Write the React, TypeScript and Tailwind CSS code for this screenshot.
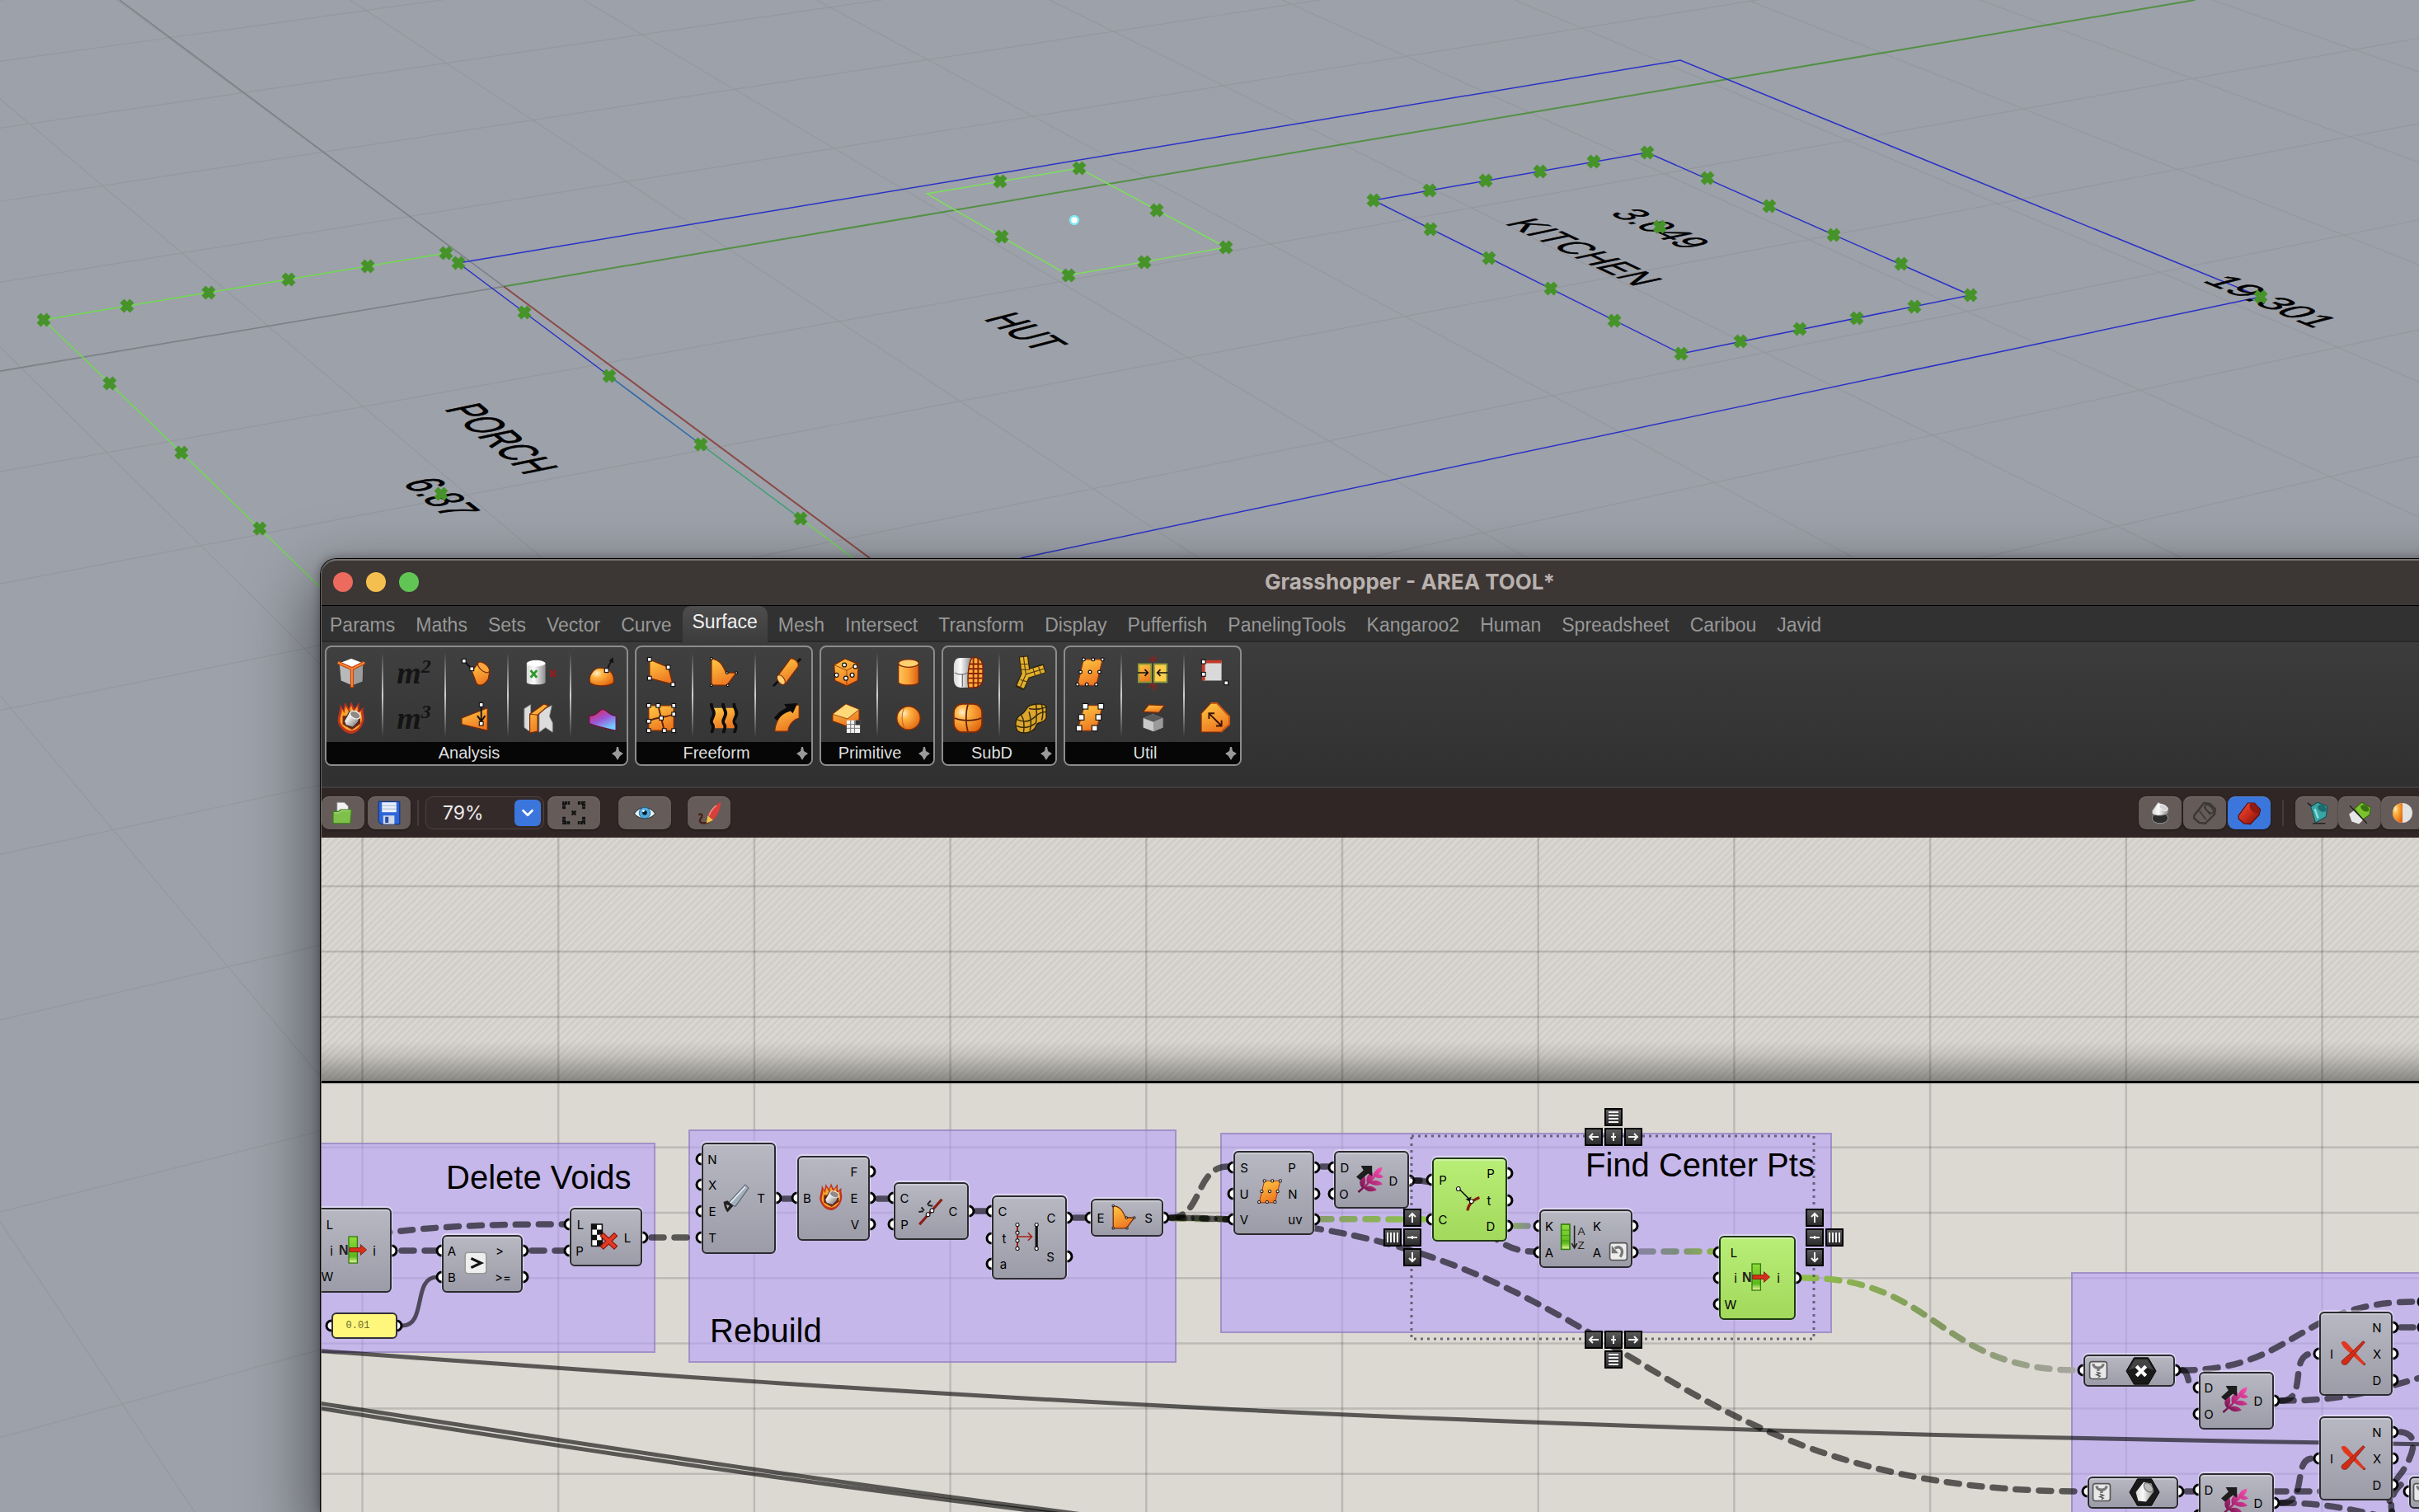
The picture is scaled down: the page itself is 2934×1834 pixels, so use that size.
import React from "react";
import { ChevronDown } from "lucide-react";

type Pt = [number, number];

/* ---------- 3D viewport ---------- */

const project = (u: number, v: number): Pt => {
  const d = 1 + 0.02375 * u - 0.044 * v;
  return [(611 + 293 * u + 92.8 * v) / d, (347.5 - 38.94 * u + 73.35 * v) / d];
};

const range = (a: number, b: number) => Array.from({ length: b - a + 1 }, (_, i) => a + i);

const gridLines: [Pt, Pt][] = [
  ...range(-15, 14).map((u) => [project(u, -20), project(u, 12)] as [Pt, Pt]),
  ...range(-20, 12).map((v) => [project(-15, v), project(14, v)] as [Pt, Pt]),
];

const crosses: Pt[] = [
  [53, 388], [154, 371], [253, 355], [350, 339], [446, 323], [541, 307], [556, 319], [636, 379], [739, 456],
  [850, 539], [971, 629], [133, 465], [220, 549], [315, 641], [535, 599],
  [1213, 220], [1309, 204], [1403, 255], [1487, 300], [1388, 318], [1296, 334], [1215, 287],
  [1666, 243], [1734, 231], [1802, 219], [1868, 208], [1933, 196], [1998, 185], [2071, 216], [2146, 250],
  [2224, 285], [2306, 320], [2390, 358], [2322, 372], [2252, 386], [2183, 399], [2111, 414], [2039, 429],
  [1958, 389], [1881, 350], [1806, 313], [1735, 278], [2013, 275], [2742, 360],
];

const floorLabels: [string, string][] = [
  ["PORCH", "matrix(0.69 0.56 -1.5 0.31 538 496)"],
  ["6.87", "matrix(0.71 0.55 -1.5 0.31 487 586)"],
  ["HUT", "matrix(0.82 0.49 -1.35 0.35 1192 387)"],
  ["KITCHEN", "matrix(0.91 0.436 -1.28 0.27 1824 271)"],
  ["3.049", "matrix(0.92 0.436 -1.26 0.26 1951 259)"],
  ["19.301", "matrix(1.12 0.47 -1.2 0.31 2670 341)"],
];

function Scene() {
  return (
    <svg className="absolute inset-0 h-full w-full" aria-hidden="true">
      {gridLines.map(([a, b], i) => (
        <line key={i} x1={a[0]} y1={a[1]} x2={b[0]} y2={b[1]} stroke="#94989f" strokeWidth="1.2" />
      ))}
      <path d="M145 0L611 347.5L0 450" fill="none" stroke="#7b7f86" strokeWidth="1.5" />
      <path d="M611 347.5L2662 0" stroke="#539145" strokeWidth="2" />
      <path d="M611 347.5L1055 677" stroke="#8c4a48" strokeWidth="2" />
      <g fill="none" strokeWidth="1.5">
        <path d="M739 456L556 319L2038 73L2742 360L1238 677" stroke="#2a31c8" />
        <path d="M739 456L850 539" stroke="#2a68a8" />
        <path d="M850 539L971 629" stroke="#35a070" />
        <path d="M971 629L1036 678M541 307L53 388L133 465L220 549L315 641L388 712" stroke="#6fdc4e" />
        <path d="M1124 235L1309 204L1487 300L1296 334Z" stroke="#7de05a" />
        <path d="M1666 243L1998 185L2390 358L2039 429Z" stroke="#2a31c8" />
      </g>
      <g fontFamily="Liberation Sans, Arial, sans-serif" fontSize="40" fill="#000" stroke="#000" strokeWidth="0.6">
        {floorLabels.map(([t, m]) => (
          <text key={t} transform={m}>{t}</text>
        ))}
      </g>
      {crosses.map(([x, y], i) => (
        <path key={i} d={`M${x - 6} ${y - 6}l12 12m0 -12l-12 12`} stroke="#459329" strokeWidth="7" />
      ))}
      <circle cx="1303" cy="267" r="5" fill="#fff" stroke="#7fe9ee" strokeWidth="2.5" />
    </svg>
  );
}

/* ---------- icons ---------- */

function Defs() {
  return (
    <svg className="absolute h-0 w-0" aria-hidden="true">
      <defs>
        <linearGradient id="or" x1="0" y1="0" x2="0.4" y2="1">
          <stop offset="0" stopColor="#ffcb45" /><stop offset="1" stopColor="#ee7a22" />
        </linearGradient>
        <linearGradient id="orH"><stop offset="0" stopColor="#ffc65a" /><stop offset="0.5" stopColor="#f9a035" /><stop offset="1" stopColor="#d95f12" /></linearGradient>
        <radialGradient id="orR" cx="0.3" cy="0.3" r="0.8"><stop offset="0" stopColor="#fff0c8" /><stop offset="0.3" stopColor="#ffb545" /><stop offset="1" stopColor="#e2660f" /></radialGradient>
        <linearGradient id="gy"><stop offset="0" stopColor="#d8d8d8" /><stop offset="0.4" stopColor="#fafafa" /><stop offset="1" stopColor="#8d8d8d" /></linearGradient>
        <linearGradient id="gd" x1="0" y1="0" x2="1" y2="1"><stop offset="0" stopColor="#8f8a86" /><stop offset="0.35" stopColor="#f2f0ee" /><stop offset="1" stopColor="#5d5855" /></linearGradient>
        <linearGradient id="bp" x1="0" y1="0" x2="0.6" y2="1"><stop offset="0.1" stopColor="#e02560" /><stop offset="0.55" stopColor="#9a58d8" /><stop offset="1" stopColor="#6fd0ff" /></linearGradient>
        <linearGradient id="rd" x1="0" y1="0" x2="1" y2="1"><stop offset="0" stopColor="#f0573c" /><stop offset="0.5" stopColor="#c62a1a" /><stop offset="1" stopColor="#6e120c" /></linearGradient>
        <linearGradient id="gn" x1="0" y1="0" x2="0" y2="1"><stop offset="0" stopColor="#8fdc3c" /><stop offset="0.75" stopColor="#5cb81c" /><stop offset="1" stopColor="#f0f7a0" /></linearGradient>
        <linearGradient id="pk" x1="1" y1="0" x2="0" y2="1"><stop offset="0" stopColor="#ff4fb4" /><stop offset="0.6" stopColor="#b02878" /><stop offset="1" stopColor="#5e1040" /></linearGradient>
        <linearGradient id="w1" gradientUnits="userSpaceOnUse" x1="1600" y1="0" x2="1730" y2="0"><stop offset="0" stopColor="#869c69" /><stop offset="1" stopColor="#90c548" /></linearGradient>
        <linearGradient id="w2" gradientUnits="userSpaceOnUse" x1="1835" y1="0" x2="1860" y2="0"><stop offset="0" stopColor="#88a866" /><stop offset="1" stopColor="#84849a" /></linearGradient>
        <linearGradient id="w3" gradientUnits="userSpaceOnUse" x1="1987" y1="0" x2="2078" y2="0"><stop offset="0" stopColor="#8884a6" /><stop offset="0.5" stopColor="#7d8c7c" /><stop offset="1" stopColor="#8cb648" /></linearGradient>
        <linearGradient id="w4" gradientUnits="userSpaceOnUse" x1="2185" y1="0" x2="2520" y2="0"><stop offset="0" stopColor="#8ebe48" /><stop offset="0.5" stopColor="#829860" /><stop offset="1" stopColor="#a8a6a2" /></linearGradient>
      </defs>
    </svg>
  );
}

const O = "#7a2a08";

const sq = (pts: Pt[], s = 5) =>
  pts.map(([x, y], i) => <rect key={i} x={x - s / 2} y={y - s / 2} width={s} height={s} fill="#fff" stroke="#111" strokeWidth="1.2" />);
const dots = (pts: Pt[], r = 2) =>
  pts.map(([x, y], i) => <circle key={i} cx={x} cy={y} r={r} fill="#fff" stroke="#111" strokeWidth="1.3" />);

const icons: Record<string, React.ReactNode> = {
  box: (<>
    <path d="M20 2L35 8L34 31L21 36L7 30L5 8Z" fill="#b9b9b9" /><path d="M20 2L35 8L21 15L5 8Z" fill="#fff" /><path d="M21 15L35 8L34 31L21 36Z" fill="#9c9c9c" />
    <path d="M3 7L21 15L37 7M21 15V39" fill="none" stroke="#c8440f" strokeWidth="4.5" /><path d="M3 7L21 15L37 7M21 15V38" fill="none" stroke="#f78b35" strokeWidth="2" />
  </>),
  flame: (<>
    <path d="M6 2L10 10L12 0L17 8L20 -1L24 8L30 0L30 11L36 6C34 13 38 16 36 24C34 33 26 40 20 40C13 40 5 33 3 25C2 17 6 12 6 2Z" fill="#c2321c" />
    <path d="M8 8L11 14L13 5L17 12L20 4L23 12L28 5L28 14L33 11C32 17 35 19 33 25C31 32 25 36 20 36C14 36 8 31 6 25C5 18 9 14 8 8Z" fill="#f7a52a" />
    <path d="M9 17L31 17L32 27L21 35L9 28Z" fill="#7d2412" />
    <path d="M11 24L18 11L31 16L29 25L22 32L13 29Z" fill="url(#gd)" stroke="#3b2c26" strokeWidth="1.2" strokeLinejoin="round" /><ellipse cx="25" cy="16" rx="7" ry="4.5" transform="rotate(25 25 16)" fill="#8f8a86" stroke="#f4f4f4" strokeWidth="1.3" />
  </>),
  pointIn: (<>
    <path d="M14 18L22 8L37 17L35 28C30 36 24 38 20 34Z" fill="url(#or)" stroke={O} strokeWidth="1.4" /><ellipse cx="29" cy="13" rx="9" ry="4.5" transform="rotate(40 29 13)" fill="#f9a640" stroke={O} strokeWidth="1.3" />
    <path d="M4 5L14 15" stroke="#111" strokeWidth="2" />{sq([[4, 5], [14, 15]])}
  </>),
  cone: (<>
    <path d="M1 20L34 7V36L1 28Z" fill="url(#or)" stroke={O} strokeWidth="1.4" /><path d="M26 3V26M21 17L26 24L31 17" fill="none" stroke="#111" strokeWidth="2" />{sq([[26, 3], [26, 27]])}
  </>),
  inside: (<>
    <path d="M4 8V32C4 36 28 36 28 32V8Z" fill="url(#gy)" /><ellipse cx="16" cy="8" rx="12" ry="4" fill="#fff" />
    <path d="M9 17l8 9m0-9l-8 9" stroke="#2f9a2a" strokeWidth="3" /><path d="M34 17l7 8m0-8l-7 8" stroke="#8e1f1f" strokeWidth="3" />
  </>),
  planks: (<>
    <path d="M1 8L9 3V38L1 32ZM20 12L36 4L33 18L37 26V38L28 32L20 38Z" fill="#dcdcdc" stroke="#999" strokeWidth="1" />
    <path d="M8 15L26 2L32 4L18 16V37L8 39Z" fill="url(#or)" stroke={O} strokeWidth="1.3" /><path d="M8 15L18 16" stroke={O} />
  </>),
  bump: (<>
    <path d="M5 33C2 24 10 12 20 14C31 14 37 24 35 33C28 38 11 38 5 33Z" fill="url(#orR)" stroke={O} strokeWidth="1.4" />
    <path d="M26 17L33 3" stroke="#111" strokeWidth="2" /><path d="M29 5L34 0L35 8Z" fill="#111" />{sq([[26, 17]])}
  </>),
  curvature: <path d="M4 17C14 18 16 9 21 9C27 9 28 17 38 17V36C28 34 14 31 4 27Z" fill="url(#bp)" stroke="#6a1038" strokeWidth="1.2" />,
  patch4: (<><path d="M5 3L29 13L35 35L5 27Z" fill="url(#or)" stroke={O} strokeWidth="1.5" />{sq([[5, 3], [29, 13], [35, 35], [5, 27]])}</>),
  net: (<>
    <path d="M4 4H36V36H4Z" fill="url(#or)" stroke={O} strokeWidth="1.3" /><path d="M16 4L24 36M4 24C14 18 26 20 36 15" stroke="#5b2008" strokeWidth="2" fill="none" />{sq([[4, 4], [16, 4], [36, 4], [4, 24], [20, 20], [36, 15], [4, 36], [24, 36], [36, 36]])}
  </>),
  edgeSrf: (<><path d="M4 2C16 3 19 12 23 20L36 20L24 36H4Z" fill="url(#or)" stroke={O} strokeWidth="1.6" />{dots([[4, 2], [24, 20], [36, 20], [25, 36], [4, 36]], 1.5)}</>),
  waves: (<>
    <path d="M6 7H34C32 15 38 18 35 24L36 33H8L5 24C9 18 4 14 6 7Z" fill="url(#or)" />
    <path d="M4 1C3 8 9 10 7 16C5 22 2 24 6 29C8 33 4 35 5 39M19 1C18 8 24 10 22 16C20 22 17 24 21 29C23 33 19 35 20 39M33 1C32 8 38 10 36 16C34 22 31 24 35 29C37 33 33 35 34 39" fill="none" stroke="#0d0d0d" strokeWidth="4" />
  </>),
  roll: (<><path d="M3 37L38 2" stroke="#111" strokeWidth="3" /><path d="M8 25L25 2C31 1 36 7 35 12L18 35C12 36 8 31 8 25Z" fill="url(#or)" stroke={O} strokeWidth="1.4" /><ellipse cx="13" cy="29" rx="4" ry="7" transform="rotate(-35 13 29)" fill="#ffce70" stroke={O} /></>),
  sweep: (<><path d="M5 37C6 20 18 8 33 3L36 4V20C28 22 22 30 22 37Z" fill="url(#or)" stroke={O} strokeWidth="1.2" /><path d="M4 20C10 12 15 9 20 7L17 2L34 1L28 14L25 11C18 13 12 17 8 23Z" fill="#0b0b0b" /></>),
  dice: (<><path d="M19 2L36 9L35 30L21 37L6 30L5 10Z" fill="url(#or)" stroke={O} strokeWidth="1.4" /><path d="M5 10L21 17L36 9M21 17V37" stroke={O} fill="none" strokeWidth="0.8" />{dots([[18, 10], [32, 12], [8, 23], [20, 27], [28, 23]], 2.6)}</>),
  plate: (<><path d="M3 15L20 2L37 9V22L20 30L3 24Z" fill="url(#or)" stroke={O} strokeWidth="1.3" /><path d="M3 15L20 2L37 9L22 21Z" fill="#ffd877" stroke={O} strokeWidth="0.8" /><path d="M21 23H38V39H21Z" fill="#f2f2f2" /><path d="M26 23V39M31 23V39M21 28H38M21 33H38" stroke="#777" /><path d="M32 23h6v6h-6z" fill="#333" /></>),
  cyl: (<><path d="M7 8V32C7 37 33 37 33 32V8Z" fill="url(#orH)" stroke={O} strokeWidth="1.4" /><ellipse cx="20" cy="8" rx="13" ry="5" fill="#ffd070" stroke={O} strokeWidth="1.4" /></>),
  ball: (<><circle cx="20" cy="20" r="15" fill="url(#orR)" stroke={O} strokeWidth="1.4" /><path d="M15 6C10 15 11 27 16 35" stroke="#c05a10" fill="none" /></>),
  capsule: (<>
    <path d="M24 1H10C4 1 2 6 2 12V28C2 35 5 39 11 39H22Z" fill="url(#gy)" /><path d="M3 20C8 23 14 23 20 20M13 22V38" stroke="#777" fill="none" strokeWidth="1.4" />
    <path d="M25 1C34 -1 39 5 39 12V28C39 36 33 40 21 39C19 30 20 10 25 1Z" fill="#ffb13c" stroke="#7a2008" strokeWidth="1.5" />
    <path d="M27 1V39M33 2V38M22 9H38M21 15H39M20 21H39M20 27H39M21 33H38" stroke="#8a2408" strokeWidth="2" />
  </>),
  subd: (<><rect x="2" y="2" width="36" height="36" rx="11" fill="url(#orR)" stroke={O} strokeWidth="1.8" /><path d="M20 3C17 12 17 28 20 37M3 20C12 24 28 24 37 20" fill="none" stroke="#5b2008" strokeWidth="1.8" /></>),
  pipes: (<><path d="M11 -1L14 22L6 40M14 22L38 14" fill="none" stroke="#2b2405" strokeWidth="12" /><path d="M11 0L14 22L7 38M14 22L37 15" fill="none" stroke="#e5b030" strokeWidth="9.5" /><path d="M11 0L14 22L7 38M14 22L37 15" fill="none" stroke="#4c3a0a" strokeWidth="1.2" /><path d="M7 9h11M8 16h11M7 29l10 3M23 14l3 10M30 12l3 9" stroke="#4c3a0a" strokeWidth="1.2" /></>),
  blob: (<><path d="M19 4C26 1 38 2 40 5V20C36 28 28 24 27 30C24 38 10 42 3 36C-1 28 1 20 7 16C14 13 14 6 19 4Z" fill="#dca52e" stroke="#2a2206" strokeWidth="1.5" /><path d="M3 22C12 26 20 24 26 18C30 14 36 12 40 12M2 30C12 34 20 32 27 26M8 16C12 22 12 32 11 39M18 12C20 20 22 28 19 36M27 3C28 10 28 18 27 26M34 2C36 10 36 18 34 23M18 8C26 10 34 8 40 6" fill="none" stroke="#3a2e08" strokeWidth="1.6" /></>),
  divSrf: (<><path d="M12 3H36L28 36H4Z" fill="url(#or)" stroke="#a03010" strokeWidth="1.2" />{dots([[12, 3], [24, 3], [36, 3], [8, 19], [20, 19], [32, 19], [4, 35], [16, 35], [28, 35]])}</>),
  iso: (<><path d="M13 4H36L28 36H4Z" fill="url(#or)" stroke="#a03010" strokeWidth="1.2" />{sq([[14, 5], [34, 5], [9, 19], [31, 19], [6, 33], [26, 33]], 7)}</>),
  snap: (<><path d="M20 -2V6M15 0L18 6M25 0L22 6M20 34V42M15 40L18 34M25 40L22 34" stroke="#9c1c1c" strokeWidth="1.6" /><rect x="2" y="9" width="16" height="23" fill="url(#or)" stroke="#8d9a3a" strokeWidth="2" /><rect x="22" y="9" width="16" height="23" fill="#ffcc4c" stroke="#8d9a3a" strokeWidth="2" /><path d="M1 20H14M10 16L14 20L10 24M39 20H26M30 16L26 20L30 24" fill="none" stroke="#111" strokeWidth="1.8" /></>),
  lift: (<><path d="M8 20L20 15L33 20V32L21 37L8 32Z" fill="#c9c9c9" /><path d="M8 20L20 15L33 20L21 25Z" fill="#5a5a5a" /><path d="M21 25V37L33 32V20Z" fill="#9a9a9a" /><path d="M15 3L35 4L28 13L8 12Z" fill="url(#or)" stroke={O} strokeWidth="1.2" /></>),
  plane: (<><path d="M5 5H28V30H5Z" fill="#d9d9d9" /><path d="M28 6H5V30" fill="none" stroke="#c23a2a" strokeWidth="4" />{sq([[5, 6], [5, 22], [34, 33]])}</>),
  offset: (<><path d="M2 14L14 1H22L38 18V28L27 38H2Z" fill="url(#or)" stroke={O} strokeWidth="1.5" /><path d="M14 1H22L38 18V28L27 38" fill="none" stroke="#d05a10" strokeWidth="2" /><path d="M12 14L28 30M12 21V14H19M28 23V30H21" fill="none" stroke="#3a1404" strokeWidth="2" /></>),
  folder: (<><path d="M11 4H22L28 10V28H11Z" fill="#f4f4f4" stroke="#888" /><path d="M5 18H13L16 15H33L31 36H5Z" fill="#7ec04a" stroke="#3f7d20" strokeWidth="1.5" /><path d="M7 20H14L17 17H31" stroke="#b7e38f" fill="none" /></>),
  floppy: (<><path d="M4 3H36V37H8L4 33Z" fill="#2d66d8" stroke="#16388a" strokeWidth="1.5" /><rect x="9" y="4" width="22" height="15" fill="#e8eefc" /><path d="M9 9H31M9 14H31" stroke="#9ab" /><rect x="11" y="24" width="17" height="13" fill="#cfd6e6" /><rect x="14" y="26" width="5" height="9" fill="#2a4fa8" /></>),
  extents: (<><path d="M5 14V5H14M26 5H35V14M35 26V35H26M14 35H5V26" fill="none" stroke="#141414" strokeWidth="5" strokeDasharray="4.2 0.8" /><path d="M17 17L23 23M23 17L17 23" stroke="#141414" strokeWidth="3" /></>),
  eye: (<><path d="M4 21C12 9 28 9 36 21C28 31 12 31 4 21Z" fill="#eaf6fc" stroke="#444" strokeWidth="1.5" /><circle cx="20" cy="20" r="8.5" fill="#4fa9dc" stroke="#135a88" /><circle cx="20" cy="20" r="3.5" fill="#0a1c2c" /><circle cx="18" cy="17" r="1.8" fill="#fff" /></>),
  brush: (<><path d="M4 23C10 20 11 24 7 29C3 36 12 37 20 34" fill="none" stroke="#4a2214" strokeWidth="3" /><path d="M38 3C29 9 21 16 18 24L26 31C33 24 37 14 38 3Z" fill="#d93f3a" /><path d="M31 9C26 13 22 18 20 24" stroke="#f08a84" strokeWidth="2" fill="none" /><path d="M18 24L26 31L16 36Z" fill="#f6c445" /></>),
  ghost: (<><ellipse cx="20" cy="28" rx="12" ry="8" fill="#2c2c2c" stroke="#aaa" /><path d="M8 17L17 4L32 12V20C26 25 12 25 8 21Z" fill="url(#gy)" stroke="#888" /><ellipse cx="25" cy="12" rx="7" ry="4" transform="rotate(30 25 12)" fill="#d4d4d4" stroke="#fff" /></>),
  wire: (<g fill="none" stroke="#3b3737" strokeWidth="3"><path d="M4 24L19 5L28 6L36 14L35 22L21 36L12 35L4 28Z" /><path d="M12 17L22 30M19 11L29 23" strokeWidth="2" /><ellipse cx="27" cy="14" rx="8" ry="4" transform="rotate(45 27 14)" strokeWidth="2" /></g>),
  redcyl: (<><path d="M4 24L18 5L28 5L37 15L35 23L22 37L12 36L4 29Z" fill="url(#rd)" stroke="#5e0c08" strokeWidth="1.5" /><ellipse cx="28" cy="13" rx="9" ry="5.5" transform="rotate(45 28 13)" fill="#8f1a12" /></>),
  teal: (<><path d="M6 5L15 12M14 36L33 36" stroke="#222" strokeWidth="2" /><path d="M11 11L21 4L36 10L34 26L18 35L15 24Z" fill="#37a6a4" stroke="#174e50" strokeWidth="1.3" /><ellipse cx="28" cy="13" rx="7" ry="5" transform="rotate(30 28 13)" fill="#1c6c70" /><path d="M17 14L22 28" stroke="#8fe0de" strokeWidth="3" /></>),
  halfgreen: (<><path d="M12 14L23 4L37 12L35 23L25 30Z" fill="#7cc22e" stroke="#34600e" strokeWidth="1.3" /><ellipse cx="28" cy="13" rx="7" ry="4.5" transform="rotate(30 28 13)" fill="#3c7312" /><path d="M4 22L12 16L25 31L19 37L8 33Z" fill="#e6e6e6" /><path d="M5 9L31 36" stroke="#222" strokeWidth="1.8" /></>),
  halfball: (<><circle cx="20" cy="20" r="15" fill="#e2e2e2" /><path d="M20 5A15 15 0 0 0 20 35Z" fill="url(#orR)" /></>),
  item: (<><text x="0" y="27" fontSize="20" fontWeight="700" fontFamily="Liberation Sans, sans-serif" fill="#222">N</text><rect x="15" y="0" width="13" height="40" fill="url(#gn)" stroke="#2f7a10" strokeWidth="1.6" /><path d="M16 17H33V12L42 20L33 28V23H16Z" fill="#d6301c" stroke="#7c140a" /></>),
  larger: (<><rect x="4" y="4" width="32" height="32" rx="4" fill="#eee" stroke="#999" strokeWidth="2" /><path d="M13 13L28 20L13 27" fill="none" stroke="#111" strokeWidth="4" /></>),
  cull: (<><rect x="2" y="0" width="16" height="33" fill="#fff" stroke="#111" strokeWidth="2" /><path d="M2 0h8v8H2zM10 8h8v8h-8zM2 16h8v8H2zM10 24h8v9h-8z" fill="#111" /><path d="M17 15L39 36M39 15L17 36" stroke="#8a140a" strokeWidth="8" /><path d="M18 16L38 35M38 16L18 35" stroke="#e23a24" strokeWidth="5" /></>),
  saw: (<><path d="M35 0L40 5L20 33L8 29Z" fill="#a3aebb" stroke="#56606c" strokeWidth="1.3" /><path d="M35 3L12 28" stroke="#e4eaf2" strokeWidth="2" /><path d="M2 26L8 24L17 32L8 42Q3 36 2 26Z" fill="#222" /><path d="M6 30L11 32L8 36Z" fill="#b5b6c1" /></>),
  fit: (<><path d="M4 39L38 1" stroke="#8c1c14" strokeWidth="4" /><path d="M7 13L11 18M21 3L16 9M3 20L10 19M24 11L17 10" stroke="#222" strokeWidth="2.5" />{dots([[17, 24], [23, 18]], 3)}</>),
  rebuild: (<><path d="M5 2V38" stroke="#9c1c14" strokeWidth="2.5" /><path d="M34 2V38" stroke="#111" strokeWidth="4" /><path d="M6 20H26M21 14L27 20L21 26" fill="none" stroke="#a82018" strokeWidth="2" />{dots([[5, 2], [5, 14], [5, 26], [5, 38], [34, 2], [34, 38]], 2.6)}</>),
  flatten: (<><path d="M3 40C14 31 26 20 38 4" stroke="url(#pk)" strokeWidth="3" fill="none" /><path d="M9 34C2 26 6 18 13 16C15 24 14 29 9 34ZM17 27C13 18 18 12 25 10C27 18 23 24 17 27ZM26 17C26 8 32 4 39 2C40 9 34 14 26 17ZM11 33C20 29 27 31 31 37C22 41 15 39 11 33ZM19 25C27 20 36 22 40 28C31 31 24 30 19 25ZM28 15C33 11 39 13 41 17C37 20 31 20 28 15Z" fill="url(#pk)" /><path d="M0 17L11 7L7 0H24V16L18 12L6 22Z" fill="#1d1d1d" /></>),
  closest: (<><path d="M7 5L22 20" stroke="#111" strokeWidth="2" /><path d="M26 17L17 21L23 24Z" fill="#111" /><path d="M20 38C21 28 28 22 38 18" fill="none" stroke="#8c1c0c" strokeWidth="4" />{dots([[6, 5], [26, 24]], 3)}</>),
  sort: (<><rect x="2" y="0" width="13" height="38" fill="url(#gn)" stroke="#2f7a10" strokeWidth="2" /><path d="M3 9H14M3 17H14M3 25H14" stroke="#3c8a18" /><path d="M22 2V34M18 29L22 36L26 29" stroke="#222" strokeWidth="2" fill="none" /><text x="27" y="16" fontSize="17" fontFamily="Liberation Sans, sans-serif" fill="#222">A</text><text x="27" y="37" fontSize="17" fontFamily="Liberation Sans, sans-serif" fill="#222">Z</text></>),
  del: (<><path d="M6 6L38 38" stroke="#3a0c08" strokeWidth="3" /><path d="M2 5C4 0 9 2 12 6L38 36L36 39L6 12Z" fill="#e0381f" /><path d="M35 2L38 4L26 18L12 36C8 40 1 38 3 32L20 17Z" fill="#cf2d18" stroke="#6c120a" strokeWidth="0.8" /></>),
  simplify: (<><rect x="1" y="1" width="38" height="38" rx="5" fill="#e8e8e8" stroke="#555" strokeWidth="3" /><path d="M9 6C9 18 31 18 31 6M20 16V22" stroke="#777" strokeWidth="6" fill="none" /><path d="M16 24L24 27L16 30L24 33L20 36" fill="none" stroke="#555" strokeWidth="2.5" /></>),
  undo: (<><rect x="1" y="1" width="38" height="38" rx="5" fill="#ececec" stroke="#555" strokeWidth="3" /><path d="M12 13C24 6 34 16 24 32" fill="none" stroke="#777" strokeWidth="6" /><path d="M5 7V24H20Z" fill="#777" /></>),
  hexX: (<><path d="M1 20L11 3H29L39 20L29 37H11Z" fill="#1a1a1a" stroke="#000" /><path d="M4 19L12 5H28L36 19C26 14 14 14 4 19Z" fill="#444" /><path d="M14 14L26 26M26 14L14 26" stroke="#fff" strokeWidth="4.5" /></>),
  hexCyl: (<><path d="M1 20L11 3H29L39 20L29 37H11Z" fill="#1a1a1a" stroke="#000" /><path d="M9 20L19 7L29 9L32 19L22 32L12 31Z" fill="url(#gy)" /><ellipse cx="25" cy="14" rx="7" ry="4.5" transform="rotate(45 25 14)" fill="#bbb" stroke="#666" /></>),
};

function Icon({ name, className = "size-10" }: { name: string; className?: string }) {
  return (
    <svg viewBox="0 0 40 40" className={`${className} overflow-visible`} aria-hidden="true">
      {icons[name]}
    </svg>
  );
}

/* ---------- ribbon ---------- */

const tabs = ["Params", "Maths", "Sets", "Vector", "Curve", "Surface", "Mesh", "Intersect", "Transform", "Display",
  "Pufferfish", "PanelingTools", "Kangaroo2", "Human", "Spreadsheet", "Caribou", "Javid"];

const panels: { name: string; cols: [string, string][] }[] = [
  { name: "Analysis", cols: [["box", "flame"], ["m2", "m3"], ["pointIn", "cone"], ["inside", "planks"], ["bump", "curvature"]] },
  { name: "Freeform", cols: [["patch4", "net"], ["edgeSrf", "waves"], ["roll", "sweep"]] },
  { name: "Primitive", cols: [["dice", "plate"], ["cyl", "ball"]] },
  { name: "SubD", cols: [["capsule", "subd"], ["pipes", "blob"]] },
  { name: "Util", cols: [["divSrf", "iso"], ["snap", "lift"], ["plane", "offset"]] },
];

function Tool({ name }: { name: string }) {
  return (
    <button type="button" aria-label={name} className="flex h-[55px] w-16 items-center justify-center">
      {name === "m2" || name === "m3" ? (
        <span className="flex items-start font-['Liberation_Serif',serif] text-[38px] leading-10 font-bold text-[#141414] italic">
          m<sup className="top-0 text-[24px] leading-6">{name[1]}</sup>
        </span>
      ) : (
        <Icon name={name} className="size-[38px]" />
      )}
    </button>
  );
}

function Panel({ name, cols }: { name: string; cols: [string, string][] }) {
  return (
    <section className="flex flex-col overflow-hidden rounded-lg border-2 border-[#8c8c8c] bg-[linear-gradient(#404040,#333333)]">
      <div className="-mx-0.5 flex pt-[3px]">
        {cols.map((c, i) => (
          <React.Fragment key={c[0]}>
            {i > 0 && <span className="mx-[5px] my-1 w-0.5 bg-[linear-gradient(transparent,#d0d0d0,transparent)]" />}
            <div className="flex flex-col">
              <Tool name={c[0]} />
              <Tool name={c[1]} />
            </div>
          </React.Fragment>
        ))}
      </div>
      <div className="mt-0.5 flex flex-1 items-center bg-[#060606] pr-1 text-[20px] leading-6 text-[#dedede]">
        <span className="flex-1 pb-0.5 text-center">{name}</span>
        <button type="button" aria-label={`More ${name}`}>
          <svg viewBox="0 0 14 16" className="h-4 w-3.5"><path d="M6 0H8L9 5L14 8L10 11L7 16L4 11L0 8L5 5Z" fill="#9a9a9a" /></svg>
        </button>
      </div>
    </section>
  );
}

function ToolButton({ name, wide, active }: { name: string; wide?: boolean; active?: boolean }) {
  return (
    <button
      type="button"
      aria-label={name}
      className={`flex h-10 items-center justify-center rounded-[9px] shadow-[0_1px_2px_rgba(0,0,0,0.5),inset_0_1px_0_rgba(255,255,255,0.15)] ${wide ? "w-16" : "w-[52px]"} ${active ? "bg-[#3a76dc]" : "bg-[#655c5a]"}`}
    >
      <Icon name={name} className="size-8" />
    </button>
  );
}

/* ---------- canvas ---------- */

type Label = [string, number, number];
interface Node {
  x: number; y: number; w: number; h: number;
  ins?: Label[]; outs?: Label[];
  art: [string, number, number, ("sm" | "md")?][];
  green?: boolean;
}

const nodes: Node[] = [
  { x: 380, y: 1465, w: 95, h: 103, ins: [["L", 400, 1486], ["i", 402, 1518], ["W", 397, 1549]], outs: [["i", 454, 1518]], art: [["item", 427, 1516]] },
  { x: 536, y: 1498, w: 98, h: 70, ins: [["A", 548, 1518], ["B", 548, 1550]], outs: [[">", 606, 1518], [">=", 610, 1550]], art: [["larger", 577, 1532]] },
  { x: 691, y: 1465, w: 88, h: 71, ins: [["L", 704, 1486], ["P", 703, 1518]], outs: [["L", 761, 1502]], art: [["cull", 732, 1501]] },
  { x: 851, y: 1386, w: 90, h: 135, ins: [["N", 864, 1407], ["X", 864, 1438], ["E", 864, 1470], ["T", 864, 1502]], outs: [["T", 923, 1454]], art: [["saw", 892, 1453]] },
  { x: 967, y: 1402, w: 88, h: 103, ins: [["B", 979, 1454]], outs: [["F", 1036, 1422], ["E", 1036, 1454], ["V", 1037, 1486]], art: [["flame", 1008, 1452]] },
  { x: 1084, y: 1434, w: 91, h: 70, ins: [["C", 1097, 1454], ["P", 1097, 1486]], outs: [["C", 1156, 1470]], art: [["fit", 1128, 1470]] },
  { x: 1203, y: 1450, w: 91, h: 102, ins: [["C", 1216, 1470], ["t", 1218, 1503], ["a", 1217, 1534]], outs: [["C", 1275, 1478], ["S", 1274, 1525]], art: [["rebuild", 1246, 1500]] },
  { x: 1323, y: 1454, w: 88, h: 46, ins: [["E", 1335, 1478]], outs: [["S", 1393, 1478]], art: [["edgeSrf", 1363, 1477]] },
  { x: 1496, y: 1396, w: 98, h: 102, ins: [["S", 1509, 1417], ["U", 1509, 1449], ["V", 1509, 1480]], outs: [["P", 1567, 1417], ["N", 1568, 1449], ["uv", 1571, 1480]], art: [["divSrf", 1540, 1446]] },
  { x: 1618, y: 1396, w: 91, h: 70, ins: [["D", 1631, 1417], ["O", 1630, 1449]], outs: [["D", 1690, 1433]], art: [["flatten", 1661, 1430]] },
  { x: 1737, y: 1404, w: 91, h: 102, ins: [["P", 1750, 1432], ["C", 1750, 1480]], outs: [["P", 1808, 1424], ["t", 1806, 1457], ["D", 1808, 1488]], art: [["closest", 1780, 1454]], green: true },
  { x: 1867, y: 1467, w: 113, h: 71, ins: [["K", 1879, 1488], ["A", 1879, 1520]], outs: [["K", 1937, 1488], ["A", 1937, 1520]], art: [["sort", 1908, 1501], ["undo", 1963, 1518, "sm"]] },
  { x: 2085, y: 1499, w: 93, h: 102, ins: [["L", 2103, 1520], ["i", 2105, 1551], ["W", 2099, 1583]], outs: [["i", 2157, 1551]], art: [["item", 2129, 1549]], green: true },
  { x: 2527, y: 1643, w: 111, h: 39, ins: [["", 2540, 1663]], outs: [["", 2630, 1663]], art: [["simplify", 2545, 1662, "sm"], ["hexX", 2597, 1663, "md"]] },
  { x: 2667, y: 1664, w: 91, h: 70, ins: [["D", 2679, 1684], ["O", 2679, 1716]], outs: [["D", 2739, 1700]], art: [["flatten", 2710, 1697]] },
  { x: 2813, y: 1591, w: 89, h: 102, ins: [["I", 2828, 1643]], outs: [["N", 2883, 1611], ["X", 2883, 1643], ["D", 2883, 1675]], art: [["del", 2854, 1641]] },
  { x: 2813, y: 1718, w: 89, h: 102, ins: [["I", 2828, 1770]], outs: [["N", 2883, 1738], ["X", 2883, 1770], ["D", 2883, 1802]], art: [["del", 2854, 1768]] },
  { x: 2532, y: 1791, w: 110, h: 39, ins: [["", 2545, 1810]], outs: [["", 2635, 1810]], art: [["simplify", 2549, 1810, "sm"], ["hexCyl", 2601, 1810, "md"]] },
  { x: 2667, y: 1787, w: 91, h: 70, ins: [["D", 2679, 1808], ["", 2679, 1839]], outs: [["D", 2739, 1824]], art: [["flatten", 2710, 1820]] },
  { x: 2922, y: 1791, w: 110, h: 39, ins: [["", 2935, 1810]], art: [["simplify", 2938, 1810, "sm"]] },
  { x: 2939, y: 1558, w: 90, h: 70, ins: [["", 2950, 1580], ["", 2950, 1611]], art: [] },
];

const groups: { x: number; y: number; w: number; h: number; label?: string; lx: number; ly: number }[] = [
  { x: 380, y: 1386, w: 415, h: 255, label: "Delete Voids", lx: 541, ly: 1404 },
  { x: 835, y: 1370, w: 592, h: 283, label: "Rebuild", lx: 861, ly: 1590 },
  { x: 1480, y: 1374, w: 742, h: 243, label: "Find Center Pts", lx: 1923, ly: 1389 },
  { x: 2512, y: 1543, w: 540, h: 420, lx: 0, ly: 0 },
];

const dashed = [
  "M430 1500C530 1486 600 1485 684 1485",
  "M487 1517H529", "M645 1517H684", "M790 1501H844", "M950 1454H960", "M1065 1454H1077", "M1184 1469H1196", "M1303 1477H1316",
  "M1420 1477C1458 1477 1450 1415 1489 1415", "M1430 1477L1489 1479",
  "M1420 1477C1972 1477 1972 1809 2526 1809",
  "M1603 1415H1611", "M1718 1432H1722", "M1716 1432C1788 1432 1788 1518 1860 1518",
  "M2647 1662C2785 1662 2785 1579 2930 1579", "M2647 1662C2656 1664 2652 1680 2660 1683",
  "M2767 1699C2800 1699 2775 1642 2805 1642", "M2767 1699C2860 1699 2890 1682 2970 1662",
  "M2912 1610H2930", "M2652 1809H2660",
  "M2767 1823C2800 1823 2780 1769 2805 1769", "M2767 1823C2830 1823 2870 1835 2934 1850", "M2758 1809H2815",
  "M2912 1737C2940 1740 2922 1775 2910 1790S2894 1822 2904 1840", "M2912 1801C2900 1810 2896 1830 2906 1846",
];

const solid = [
  "M488 1608C518 1608 500 1549 530 1549",
  "M380 1638C1100 1690 1700 1735 2960 1752",
  "M380 1701C700 1750 1000 1798 1400 1848",
  "M380 1707C700 1758 1000 1804 1400 1850",
];

const at = (x: number, y: number) => ({ left: x - 390, top: y - 1016 });

const keys: [string, number, number][] = [
  ["h", 1946, 1344], ["l", 1922, 1368], ["v", 1946, 1368], ["r", 1970, 1368],
  ["l", 1922, 1614], ["v", 1946, 1614], ["r", 1970, 1614], ["h", 1946, 1638],
  ["u", 1702, 1466], ["m", 1702, 1490], ["d", 1702, 1514], ["b", 1678, 1490],
  ["u", 2190, 1466], ["m", 2190, 1490], ["d", 2190, 1514], ["b", 2214, 1490],
];

const keyPaths: Record<string, [string, string]> = {
  h: ["Distribute rows", "M5 5H17M5 9H17M5 13H17M5 17H17"],
  b: ["Distribute columns", "M5 5V17M9 5V17M13 5V17M17 5V17"],
  l: ["Align left", "M17 11H6M10 7L6 11L10 15"],
  r: ["Align right", "M5 11H16M12 7L16 11L12 15"],
  u: ["Align top", "M11 17V6M7 10L11 6L15 10"],
  d: ["Align bottom", "M11 5V16M7 12L11 16L15 12"],
  v: ["Align vertical centre", "M11 6V16M8 11H14"],
  m: ["Align horizontal centre", "M5 11H17M11 9V13"],
};

function Ports() {
  const pts: Pt[] = [[402, 1608], [481, 1608]];
  nodes.forEach((n) => {
    n.ins?.forEach(([, , y]) => pts.push([n.x, y - 1]));
    n.outs?.forEach(([, , y]) => pts.push([n.x + n.w, y - 1]));
  });
  return <>{pts.map(([x, y], i) => <circle key={i} cx={x} cy={y} r="6" fill="#fff" stroke="#000" strokeWidth="3" />)}</>;
}

function NodeBox({ n }: { n: Node }) {
  return (
    <div
      className={`absolute rounded-md border-2 ${n.green ? "border-[#1f3a14] bg-[linear-gradient(#b9ee77,#a1d95b)] shadow-[0_-1px_1px_1px_rgba(255,255,255,0.45),inset_0_2px_0_rgba(255,255,255,0.35)]" : "border-[#2c2b30] bg-[linear-gradient(#b7b8c2,#9c9ca8)] shadow-[0_-1px_1px_1px_rgba(255,255,255,0.45),inset_0_2px_0_rgba(255,255,255,0.25)]"}`}
      style={{ ...at(n.x, n.y), width: n.w, height: n.h }}
    >
      {[...(n.ins ?? []), ...(n.outs ?? [])].filter(([t]) => t).map(([t, x, y], i) => (
        <span
          key={i}
          className="absolute -translate-x-1/2 -translate-y-1/2 font-['Inter',sans-serif] text-[15px] leading-5 text-black"
          style={{ left: x - n.x - 2, top: y - n.y - 2 }}
        >
          {t}
        </span>
      ))}
      {n.art.map(([name, x, y, size]) => (
        <span key={name} className="absolute -translate-x-1/2 -translate-y-1/2" style={{ left: x - n.x - 2, top: y - n.y - 2 }}>
          <Icon name={name} className={size === "sm" ? "size-[22px]" : size === "md" ? "size-[38px]" : "size-8"} />
        </span>
      ))}
    </div>
  );
}

function Canvas() {
  return (
    <main className="relative flex-1 overflow-hidden bg-[#dcd9d3]">
      <div className="absolute inset-x-0 top-0 h-[298px] border-b-[3px] border-black bg-[repeating-linear-gradient(135deg,#d1cec9_0px,#d1cec9_3px,#dad7d1_3px,#dad7d1_6px)]">
        <div className="absolute inset-x-0 bottom-0 h-12 bg-[linear-gradient(transparent,rgba(60,60,55,0.12)_35%,rgba(60,60,55,0.5))]" />
      </div>
      <svg className="absolute inset-0 h-full w-full" aria-hidden="true">
        <g transform="translate(-390 -1016)" stroke="#000" strokeOpacity="0.14" strokeWidth="2.5">
          {range(0, 10).map((k) => <line key={k} x1={439.5 + 237.7 * k} x2={439.5 + 237.7 * k} y1="1016" y2="2400" />)}
          {range(0, 14).filter((k) => k !== 3).map((k) => <line key={k} x1="390" x2="3100" y1={1075 + 79.2 * k} y2={1075 + 79.2 * k} />)}
        </g>
      </svg>
      {groups.map((g) => (
        <div key={g.x} className="absolute border-2 border-[rgba(120,100,160,0.45)] bg-[rgba(182,160,248,0.6)]" style={{ ...at(g.x, g.y), width: g.w, height: g.h }} />
      ))}
      <svg className="absolute inset-0 h-full w-full" aria-hidden="true">
        <g transform="translate(-390 -1016)" fill="none">
          <g stroke="#000" strokeOpacity="0.6" strokeWidth="5">
            {solid.map((d) => <path key={d} d={d} />)}
          </g>
          <g strokeLinecap="round" strokeWidth="7.5" strokeDasharray="15 13">
            <path d="M1422 1478L1489 1479" stroke="#8fa070" />
            <g stroke="#000" strokeOpacity="0.6">{dashed.map((d) => <path key={d} d={d} />)}</g>
            <path d="M1600 1478.7L1730 1479" stroke="url(#w1)" />
            <path d="M1838 1487L1860 1487.1" stroke="url(#w2)" />
            <path d="M1990 1518L2078 1518.1" stroke="url(#w3)" />
            <path d="M2188 1550C2350 1550 2350 1662 2520 1662" stroke="url(#w4)" />
          </g>
          <Ports />
          <rect x="1712" y="1378" width="488" height="246" stroke="#50485f" strokeOpacity="0.8" strokeWidth="3" strokeDasharray="3 5" />
        </g>
      </svg>
      {groups.filter((g) => g.label).map((g) => (
        <h2 key={g.label} className="absolute text-[40px] leading-[48px] whitespace-nowrap text-black" style={at(g.lx, g.ly)}>{g.label}</h2>
      ))}
      {nodes.map((n, i) => <NodeBox key={i} n={n} />)}
      <div className="absolute h-8 w-20 rounded-md border-2 border-[#33313a] bg-[#fff67c] pr-4 text-center font-['Liberation_Mono',monospace] text-[12px] leading-7 text-[#66692a]" style={at(402, 1592)}>
        0.01
      </div>
      {keys.map(([k, x, y], i) => (
        <button key={i} type="button" aria-label={keyPaths[k][0]} className="absolute size-[22px] border-2 border-black bg-[linear-gradient(#5a5a5a,#2c2c2c)]" style={at(x, y)}>
          <svg viewBox="2 2 18 18" className="size-full"><path d={keyPaths[k][1]} fill="none" stroke="#f2f2f2" strokeWidth="2" /></svg>
        </button>
      ))}
    </main>
  );
}

export default function App() {
  return (
    <div className="relative h-screen overflow-hidden bg-[#9da1a9] font-['Liberation_Sans',Arial,sans-serif]">
      <Defs />
      <Scene />
      <div className="absolute top-[677px] -right-24 bottom-0 left-[388px] flex flex-col overflow-hidden rounded-tl-[20px] border-t border-l border-black shadow-[0_36px_80px_10px_rgba(0,0,0,0.5),0_0_12px_rgba(0,0,0,0.35)]">
        <div className="flex flex-1 flex-col overflow-hidden rounded-tl-[19px] border-l border-[#6d6a68] bg-[#313131]">
          <header className="relative flex h-[57px] items-center rounded-tl-[19px] border-t-2 border-b border-t-[#77726f] border-b-black bg-[#3c3634] pb-0.5 pl-3.5">
            <div className="flex gap-4">
              <button type="button" aria-label="Close" className="size-6 rounded-full bg-[#ec6a5e]" />
              <button type="button" aria-label="Minimize" className="size-6 rounded-full bg-[#f4bf4f]" />
              <button type="button" aria-label="Zoom" className="size-6 rounded-full bg-[#61c554]" />
            </div>
            <h1 className="mr-[118px] flex-1 text-center font-['Inter',sans-serif] text-[26px] leading-8 font-bold text-[#b8b1ae]">Grasshopper - AREA TOOL*</h1>
          </header>
          <nav className="-ml-0.5 flex h-11 shrink-0 gap-px border-b-2 border-[#282828] text-[23px] leading-[26px]">
            {tabs.map((t) => (
              <button
                key={t}
                type="button"
                className={t === "Surface" ? "-mb-0.5 rounded-t-[10px] bg-[linear-gradient(#4d4d4d,#3c3c3c)] px-3 pb-1.5 text-[#f0f0f0]" : "px-3 pt-1 text-[#979797]"}
              >
                {t}
              </button>
            ))}
          </nav>
          <div className="flex h-[177px] shrink-0 items-start gap-2 border-b-2 border-[#423d3d] bg-[linear-gradient(#3c3c3c,#303030)] pt-1 pl-1">
            {panels.map((p) => (
              <div key={p.name} className="flex h-[146px]">
                <Panel {...p} />
              </div>
            ))}
          </div>
          <div className="flex h-[60px] shrink-0 items-center bg-[#312626] pr-[90px]">
            <div className="flex gap-1">
              <ToolButton name="folder" />
              <ToolButton name="floppy" />
            </div>
            <span className="mx-2 h-8 w-0.5 bg-[#453b3b]" />
            <div className="relative mr-1">
              <select aria-label="Zoom level" className="h-10 w-36 appearance-none rounded-[9px] border border-[#4d4343] bg-[#352a2a] pl-5 font-['Inter',sans-serif] text-[23px] leading-8 text-[#eceaea]">
                <option>79%</option>
              </select>
              <span className="pointer-events-none absolute top-1 right-1 flex size-8 items-center justify-center rounded-md bg-[#3a76dc] text-white">
                <ChevronDown size={22} strokeWidth={3} />
              </span>
            </div>
            <ToolButton name="extents" wide />
            <div className="ml-[22px] flex gap-5">
              <ToolButton name="eye" wide />
              <ToolButton name="brush" />
            </div>
            <div className="ml-auto flex items-center gap-0.5">
              <ToolButton name="ghost" />
              <ToolButton name="wire" />
              <ToolButton name="redcyl" active />
            </div>
            <span className="mx-3.5 h-8 w-0.5 bg-[#453b3b]" />
            <div className="flex">
              <ToolButton name="teal" />
              <ToolButton name="halfgreen" />
              <ToolButton name="halfball" />
            </div>
          </div>
          <Canvas />
        </div>
      </div>
    </div>
  );
}
